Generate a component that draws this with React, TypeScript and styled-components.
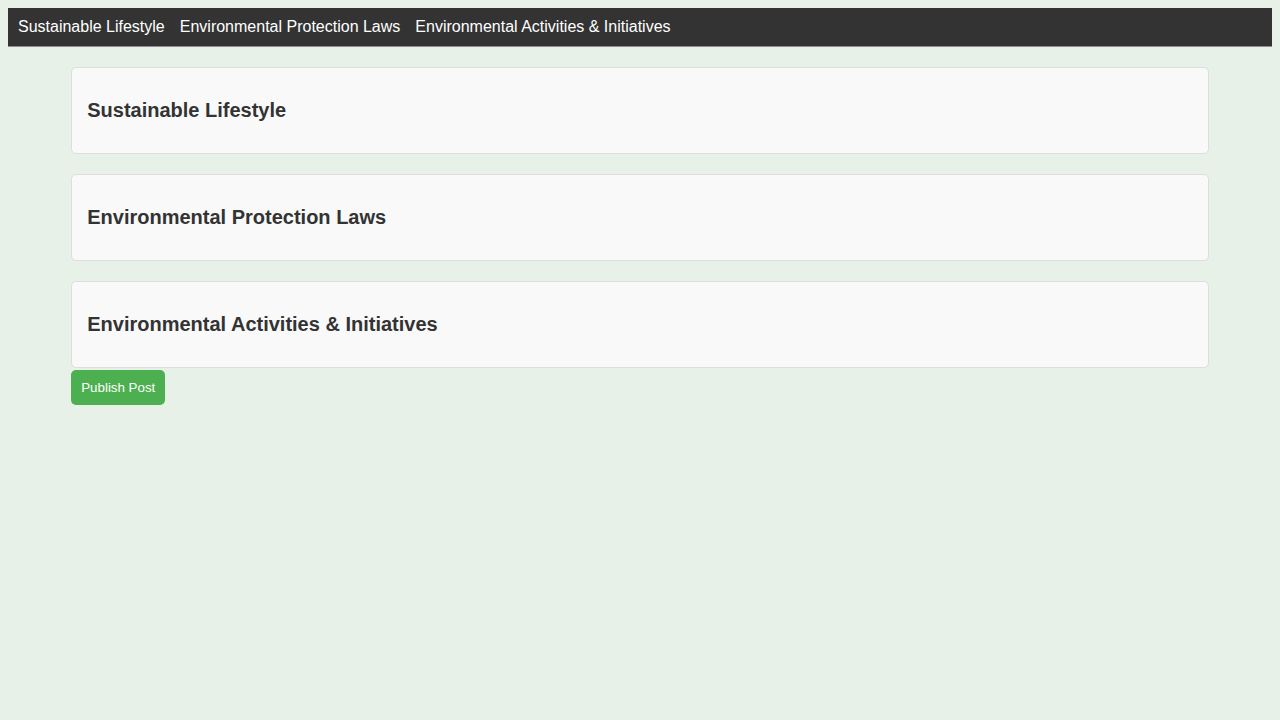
import React from 'react'
import { styled, createGlobalStyle } from 'styled-components'

const GlobalStyle = createGlobalStyle`
  body {
    margin: 8px;
    background-color: #e8f1e8;
    font-family: 'Liberation Sans', Arial, Helvetica, sans-serif;
  }
`

const NavBar = styled.nav`
  display: flex;
  align-items: center;
  gap: 15px;
  padding: 10px;
  background-color: #333;
  border-bottom: 1px solid #8c8c8c;
`

const NavLink = styled.a`
  color: #fff;
  font-size: 16px;
  line-height: 18px;
  text-decoration: none;
  cursor: pointer;
`

const Container = styled.main`
  width: 90%;
  margin: 0 auto;
`

const Section = styled.section`
  margin-top: 20px;
  padding: 15px;
  background-color: #f9f9f9;
  border: 1px solid #ddd;
  border-radius: 5px;
`

const SectionTitle = styled.h2`
  margin: 16px 0;
  font-size: 20px;
  line-height: 23px;
  font-weight: 700;
  color: #333;
`

const PublishButton = styled.button`
  margin-top: 2px;
  padding: 10px;
  border: none;
  border-radius: 5px;
  background-color: #4caf50;
  color: #fff;
  font-family: inherit;
  font-size: 13.33px;
  line-height: 15px;
  cursor: pointer;
`

const topics = [
  'Sustainable Lifestyle',
  'Environmental Protection Laws',
  'Environmental Activities & Initiatives',
]

export default function App() {
  return (
    <>
      <GlobalStyle />
      <header>
        <NavBar>
          {topics.map((t) => (
            <NavLink key={t}>{t}</NavLink>
          ))}
        </NavBar>
      </header>
      <Container>
        {topics.map((t) => (
          <Section key={t}>
            <SectionTitle>{t}</SectionTitle>
          </Section>
        ))}
        <PublishButton>Publish Post</PublishButton>
      </Container>
    </>
  )
}
